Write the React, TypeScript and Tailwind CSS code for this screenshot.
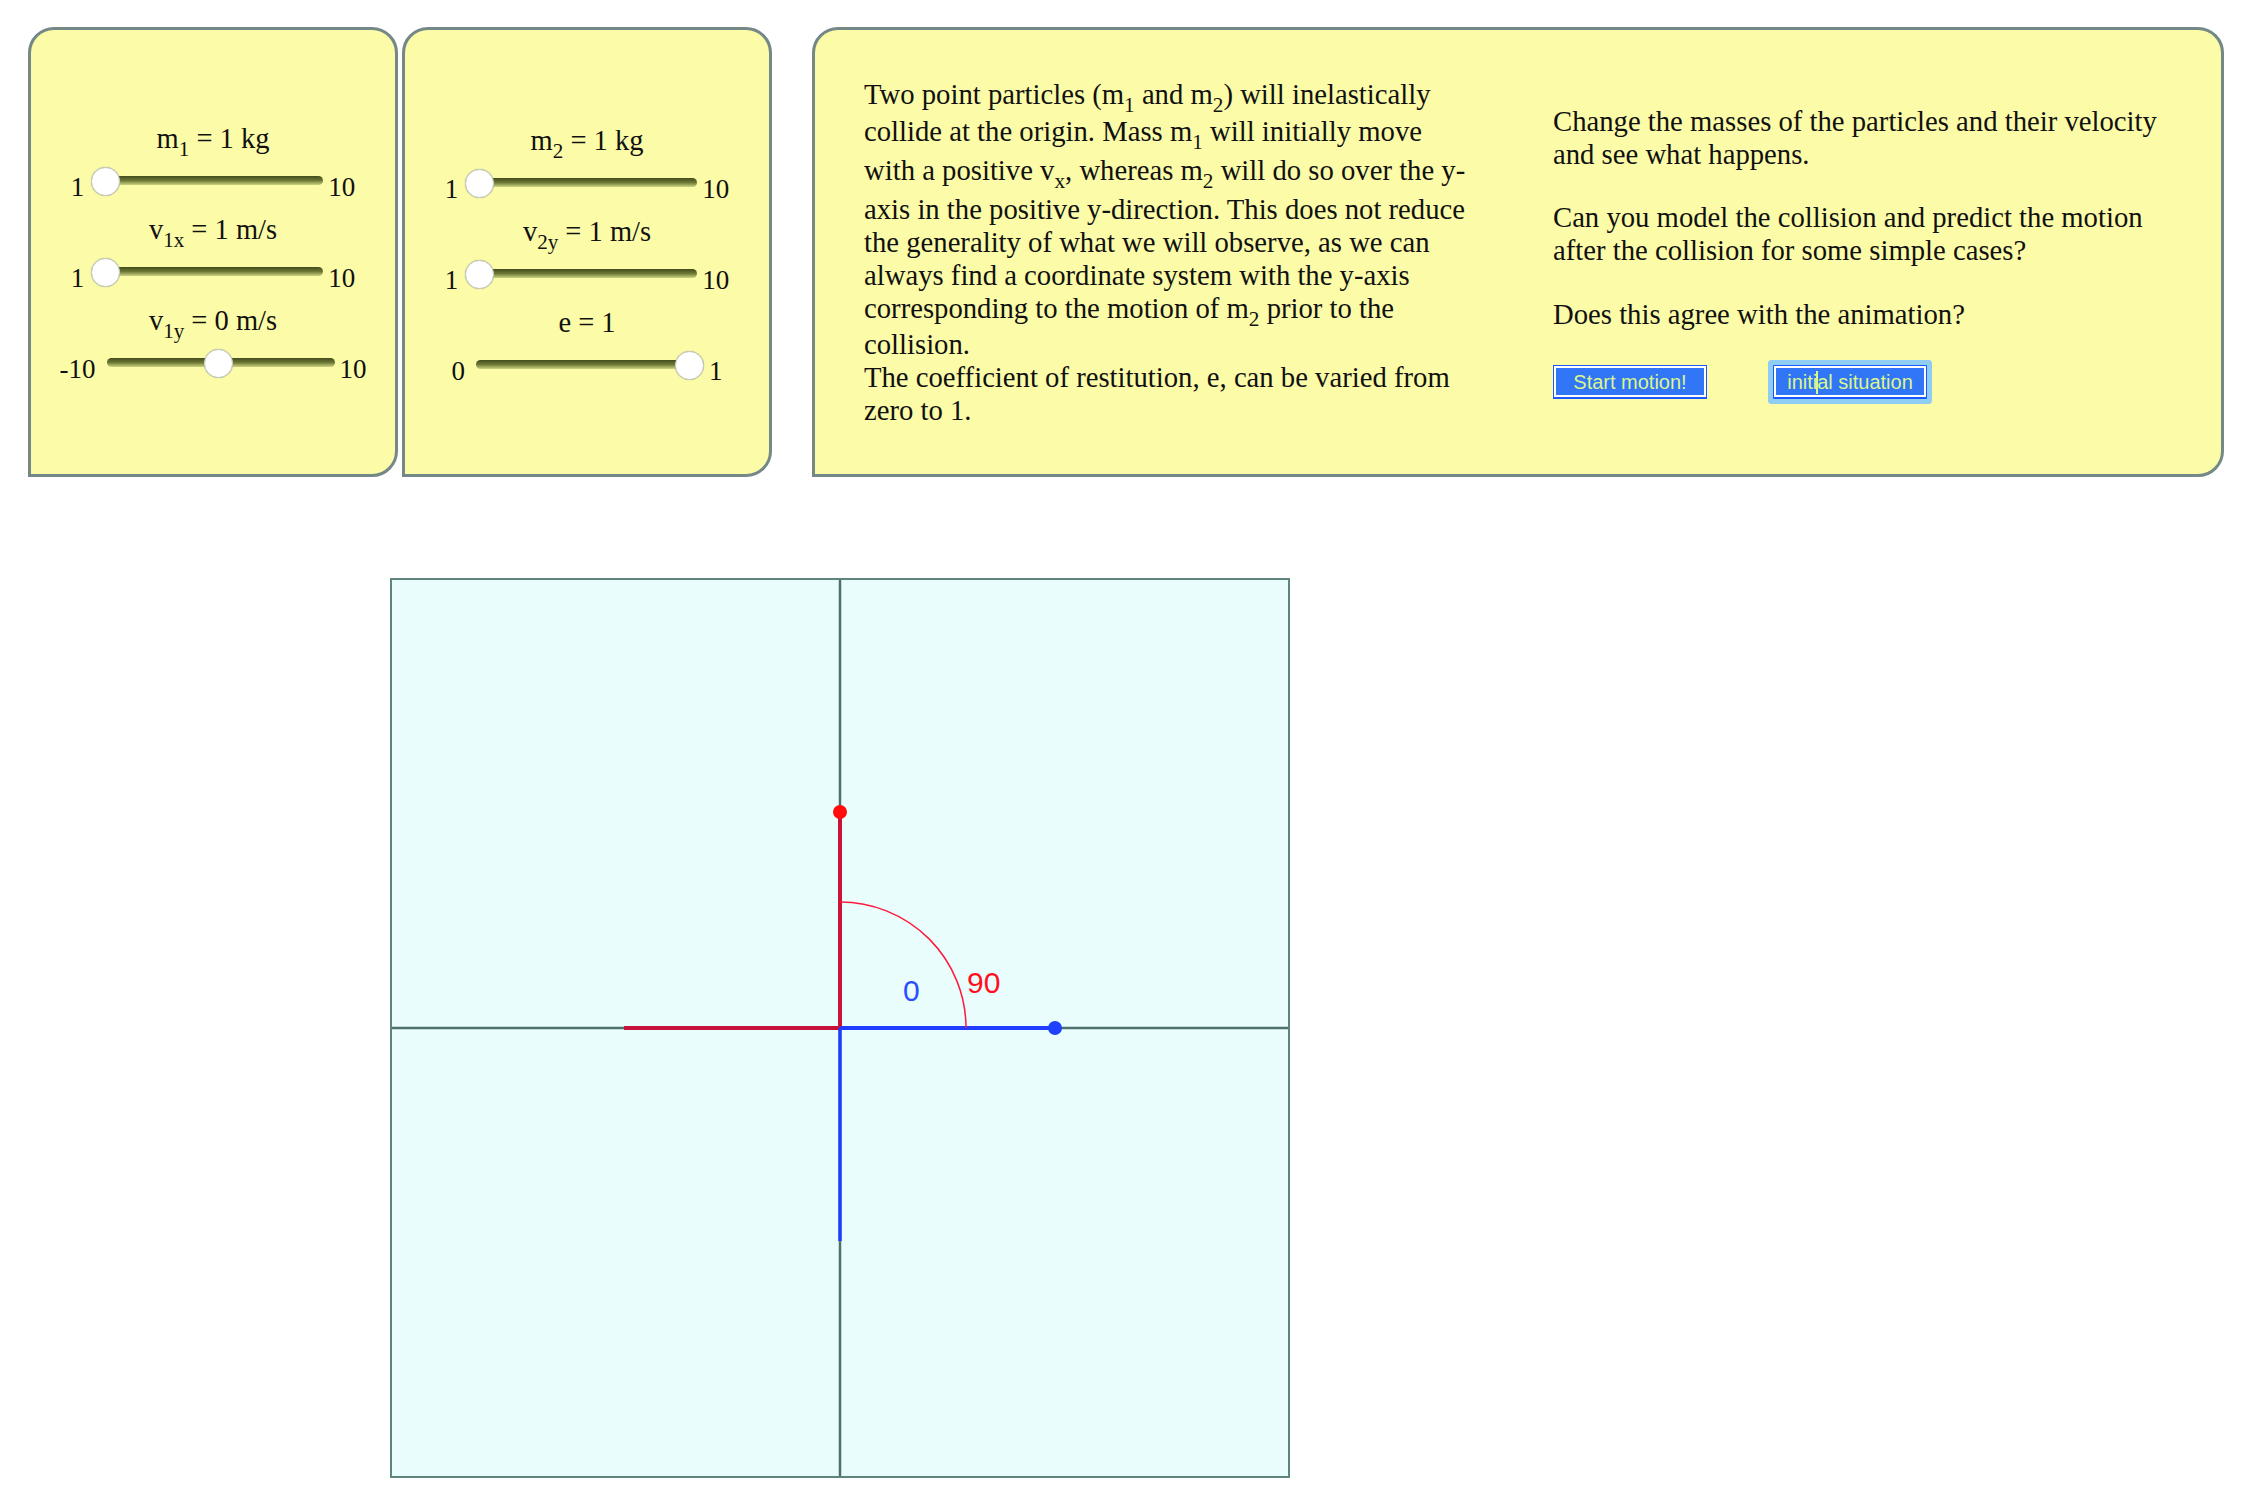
import React from "react"

const serif = "font-['Liberation_Serif','Times_New_Roman',serif]"

interface SliderProps {
    min: number,
    max: number,
    value: number
}

function Slider(props: SliderProps) {
    const pct = (props.value - props.min) / (props.max - props.min)
    return (
        <div className="flex items-center justify-center h-[44px]">
            <span className="text-[27px] leading-none mt-[12px] text-[#111]">{props.min}</span>
            <div className="relative w-[232px] h-[30px] ml-[7px] mr-[5px]">
                <div className="absolute left-[4px] right-0 top-[10px] h-[9px] rounded-full bg-linear-to-b from-[#434c1c] via-[#6d7834] to-[#cdd583]" />
                <div
                    className="absolute top-px w-[29px] h-[29px] rounded-full bg-white border border-[#c6cbbd] shadow-[0_0_1px_#9aa08a]"
                    style={{ left: pct * 203 }}
                />
            </div>
            <span className="text-[27px] leading-none mt-[12px] text-[#111]">{props.max}</span>
        </div>
    )
}

function Label({ children }: { children: React.ReactNode }) {
    return (
        <div className="h-[40px] flex items-center justify-center text-[28.5px] leading-none text-[#111]">
            <span>{children}</span>
        </div>
    )
}

function Panel({ className, children }: { className: string, children: React.ReactNode }) {
    return (
        <div className={"h-[450px] bg-[#fcfca8] border-[3px] border-[#738887] rounded-tl-[26px] rounded-tr-[26px] rounded-br-[26px] " + className}>
            {children}
        </div>
    )
}

function Sub({ children }: { children: React.ReactNode }) {
    return <sub className="text-[0.74em] -bottom-[0.38em]">{children}</sub>
}

export default function App() {
    return (
        <div className={"min-h-screen bg-white pt-[27px] pl-[28px] " + serif}>
            <div className="flex items-start">
                <Panel className="w-[370px] flex flex-col justify-center gap-[7px]">
                    <div>
                        <Label>m<Sub>1</Sub> = 1 kg</Label>
                        <Slider min={1} max={10} value={1} />
                    </div>
                    <div>
                        <Label>v<Sub>1x</Sub> = 1 m/s</Label>
                        <Slider min={1} max={10} value={1} />
                    </div>
                    <div>
                        <Label>v<Sub>1y</Sub> = 0 m/s</Label>
                        <Slider min={-10} max={10} value={0} />
                    </div>
                </Panel>
                <Panel className="w-[370px] ml-[4px] flex flex-col justify-center gap-[7px] pt-[4px]">
                    <div>
                        <Label>m<Sub>2</Sub> = 1 kg</Label>
                        <Slider min={1} max={10} value={1} />
                    </div>
                    <div>
                        <Label>v<Sub>2y</Sub> = 1 m/s</Label>
                        <Slider min={1} max={10} value={1} />
                    </div>
                    <div>
                        <Label>e = 1</Label>
                        <Slider min={0} max={1} value={1} />
                    </div>
                </Panel>
                <Panel className="w-[1412px] ml-[40px] flex items-center pl-[49px] text-[28.7px] leading-[33px] text-[#111]">
                    <div className="w-[689px] whitespace-nowrap">
                        <div className="pb-[4px]">Two point particles (m<Sub>1</Sub> and m<Sub>2</Sub>) will inelastically</div>
                        <div className="pb-[6px]">collide at the origin. Mass m<Sub>1</Sub> will initially move</div>
                        <div className="pb-[6px]">with a positive v<Sub>x</Sub>, whereas m<Sub>2</Sub> will do so over the y-</div>
                        <div>axis in the positive y-direction. This does not reduce</div>
                        <div>the generality of what we will observe, as we can</div>
                        <div>always find a coordinate system with the y-axis</div>
                        <div className="pb-[3px]">corresponding to the motion of m<Sub>2</Sub> prior to the</div>
                        <div>collision.</div>
                        <div>The coefficient of restitution, e, can be varied from</div>
                        <div>zero to 1.</div>
                    </div>
                    <div className="flex-1 whitespace-nowrap">
                        <p>Change the masses of the particles and their velocity<br />and see what happens.</p>
                        <p className="mt-[30px]">Can you model the collision and predict the motion<br />after the collision for some simple cases?</p>
                        <p className="mt-[31px]">Does this agree with the animation?</p>
                        <div className="mt-[34px] flex items-center gap-[66px] font-['Liberation_Sans',Arial,sans-serif] text-[20px] leading-none text-[#dcf58c]">
                            <button className="w-[154px] h-[34px] bg-[#3076f6] border border-b-2 border-[#1c58ff] shadow-[inset_0_0_0_2px_#ffffff]">
                                Start motion!
                            </button>
                            <button className="relative w-[154px] h-[34px] bg-[#3076f6] border border-b-2 border-[#1c58ff] rounded-[1px] shadow-[inset_0_0_0_2px_#ffffff,0_0_0_5px_#8fcdf2]">
                                initial situation
                                <span className="absolute left-[42px] top-[5px] w-[2px] h-[23px] bg-[#dcf58c]" />
                            </button>
                        </div>
                    </div>
                </Panel>
            </div>
            <div className="mt-[101px] ml-[362px] w-[900px] h-[900px] border-2 border-[#5f847d] bg-[#e8fdfc]">
                <svg width="896" height="896" viewBox="0 0 896 896">
                    <line x1="448" y1="0" x2="448" y2="896" stroke="#4f716b" strokeWidth="2.5" />
                    <line x1="0" y1="448" x2="896" y2="448" stroke="#4f716b" strokeWidth="2.5" />
                    <line x1="232" y1="448" x2="448" y2="448" stroke="#c4123a" strokeWidth="4" />
                    <line x1="448" y1="448" x2="448" y2="232" stroke="#cc1236" strokeWidth="4" />
                    <line x1="448" y1="448" x2="663" y2="448" stroke="#1f3cff" strokeWidth="4" />
                    <line x1="448" y1="448" x2="448" y2="661" stroke="#1f3cff" strokeWidth="3.5" />
                    <path d="M 448 322 A 126 126 0 0 1 574 448" fill="none" stroke="#ff1a3c" strokeWidth="1.5" />
                    <circle cx="448" cy="232" r="7" fill="#ff0d0d" />
                    <circle cx="663" cy="448" r="7" fill="#2040ff" />
                    <text x="511" y="421" fill="#2a4dff" fontSize="30" fontFamily="Liberation Sans, Arial, sans-serif">0</text>
                    <text x="575" y="413" fill="#ff1020" fontSize="30" fontFamily="Liberation Sans, Arial, sans-serif">90</text>
                </svg>
            </div>
        </div>
    )
}
